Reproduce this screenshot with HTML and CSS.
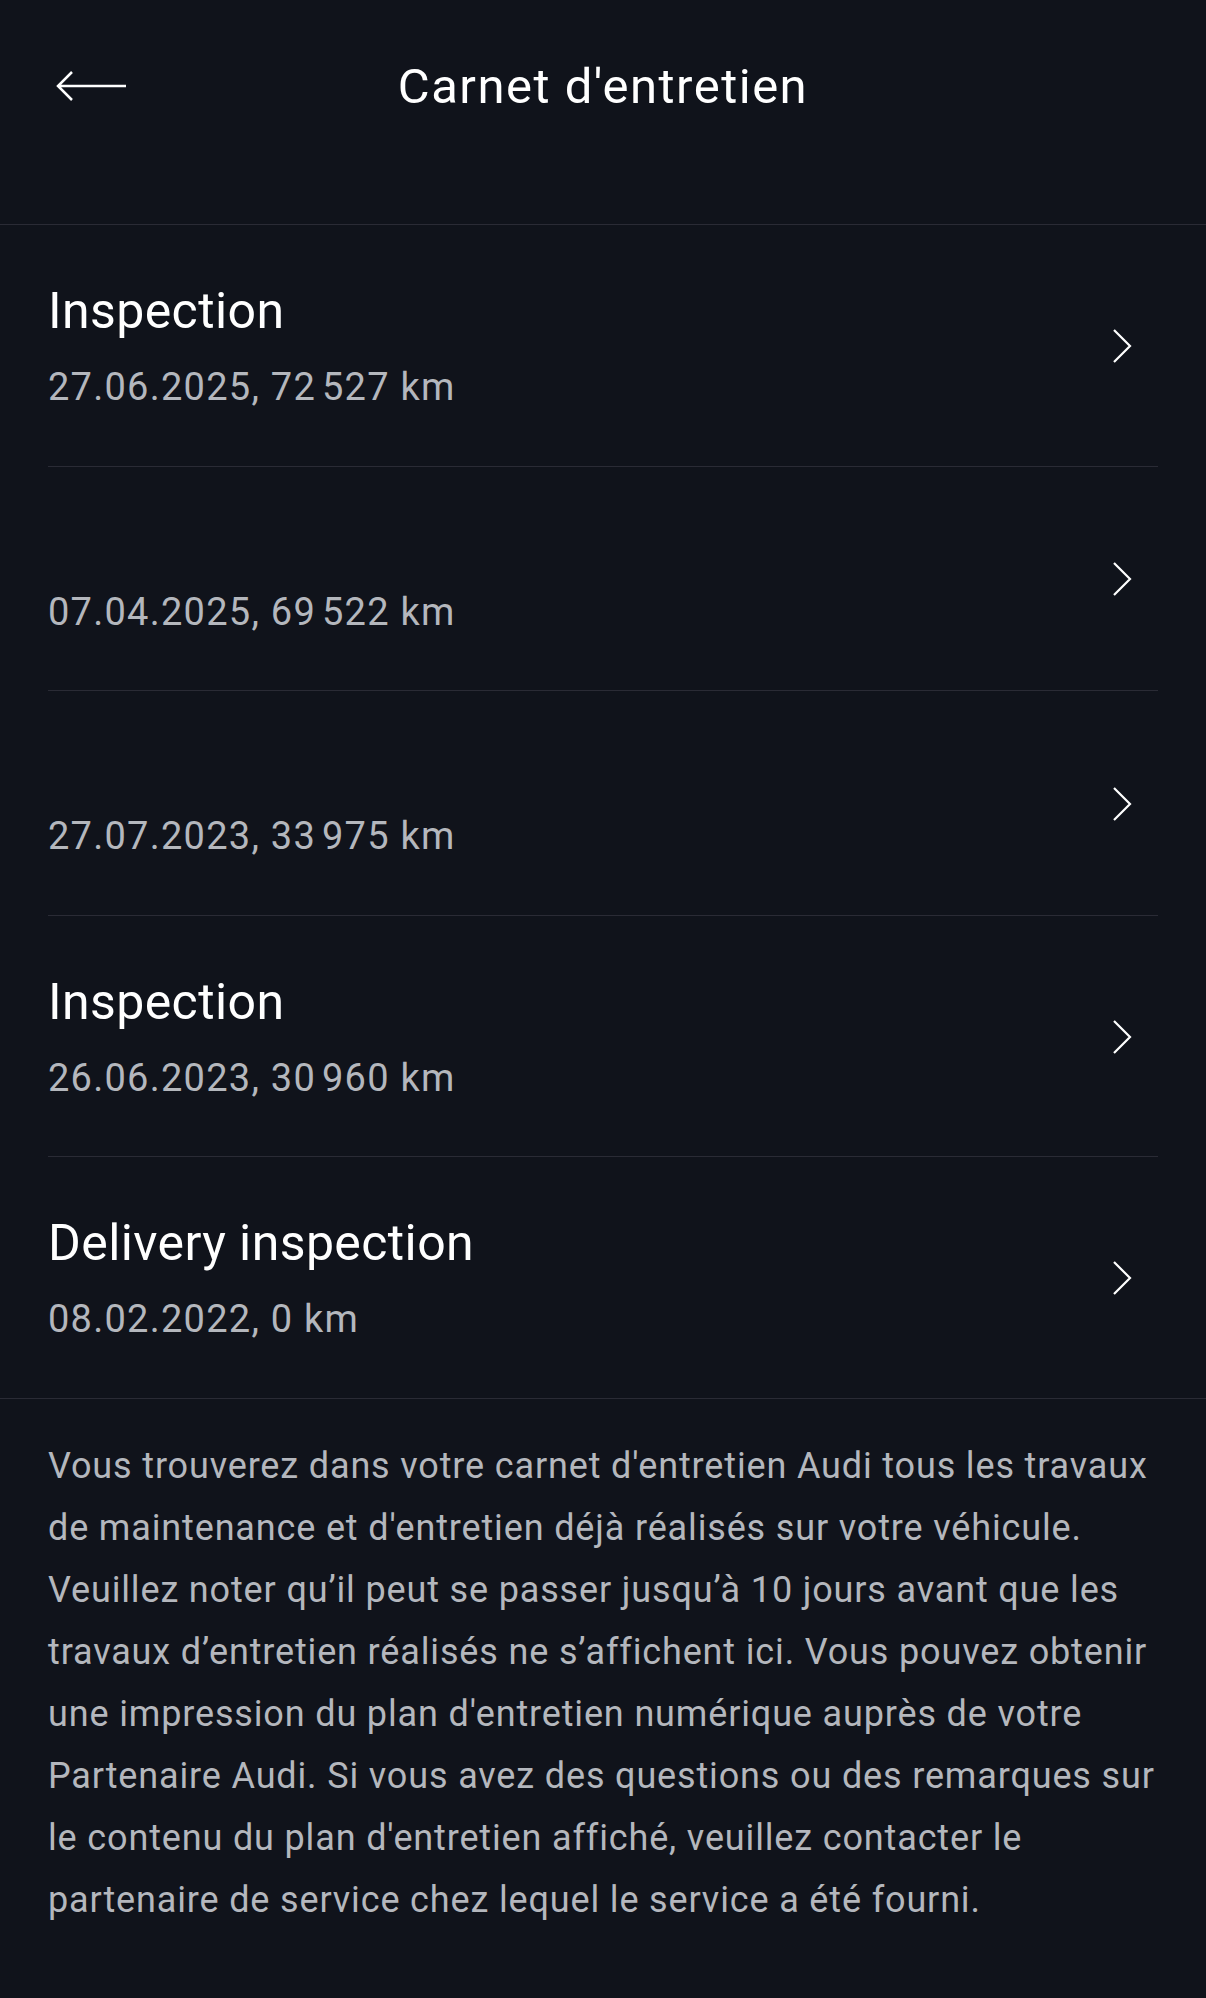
FILE: index.html
```html
<!DOCTYPE html>
<html lang="fr">
<head>
    <meta charset="UTF-8">
    <meta name="viewport" content="width=device-width, initial-scale=1.0">
    <title>Carnet d'entretien</title>
    <link rel="stylesheet" href="styles.css">
</head>
<body>

    <header class="header">
        <div class="topbar">
            <button class="back" aria-label="Retour">
                <svg width="72" height="32" viewBox="0 0 72 32">
                    <path d="M16 2 L2 16 L16 30 M2 16 H70" fill="none" stroke="#fff" stroke-width="2.5"/>
                </svg>
            </button>
            <h1>Carnet d'entretien</h1>
        </div>
    </header>

    <ul class="entries">
        <li class="entry">
            <div class="entry-text">
                <div class="entry-title">Inspection</div>
                <div class="entry-meta">27.06.2025, 72&#8239;527 km</div>
            </div>
            <svg class="chevron" width="22" height="36" viewBox="0 0 22 36"><path d="M2 2 L18 18 L2 34" fill="none" stroke="#fff" stroke-width="2.2"/></svg>
        </li>
        <li class="entry">
            <div class="entry-text">
                <div class="entry-title"></div>
                <div class="entry-meta">07.04.2025, 69&#8239;522 km</div>
            </div>
            <svg class="chevron" width="22" height="36" viewBox="0 0 22 36"><path d="M2 2 L18 18 L2 34" fill="none" stroke="#fff" stroke-width="2.2"/></svg>
        </li>
        <li class="entry">
            <div class="entry-text">
                <div class="entry-title"></div>
                <div class="entry-meta">27.07.2023, 33&#8239;975 km</div>
            </div>
            <svg class="chevron" width="22" height="36" viewBox="0 0 22 36"><path d="M2 2 L18 18 L2 34" fill="none" stroke="#fff" stroke-width="2.2"/></svg>
        </li>
        <li class="entry">
            <div class="entry-text">
                <div class="entry-title">Inspection</div>
                <div class="entry-meta">26.06.2023, 30&#8239;960 km</div>
            </div>
            <svg class="chevron" width="22" height="36" viewBox="0 0 22 36"><path d="M2 2 L18 18 L2 34" fill="none" stroke="#fff" stroke-width="2.2"/></svg>
        </li>
        <li class="entry">
            <div class="entry-text">
                <div class="entry-title">Delivery inspection</div>
                <div class="entry-meta">08.02.2022, 0 km</div>
            </div>
            <svg class="chevron" width="22" height="36" viewBox="0 0 22 36"><path d="M2 2 L18 18 L2 34" fill="none" stroke="#fff" stroke-width="2.2"/></svg>
        </li>
    </ul>

    <p class="note">
        Vous trouverez dans votre carnet d'entretien Audi tous les travaux<br>
        de maintenance et d'entretien déjà réalisés sur votre véhicule.<br>
        Veuillez noter qu’il peut se passer jusqu’à 10 jours avant que les<br>
        travaux d’entretien réalisés ne s’affichent ici. Vous pouvez obtenir<br>
        une impression du plan d'entretien numérique auprès de votre<br>
        Partenaire Audi. Si vous avez des questions ou des remarques sur<br>
        le contenu du plan d'entretien affiché, veuillez contacter le<br>
        partenaire de service chez lequel le service a été fourni.
    </p>

</body>
</html>
```

FILE: styles.css
```css
body {
    margin: 0;
    background-color: #10131b;
    color: #fff;
    font-family: Roboto, "Noto Sans", sans-serif;
}

.header {
    height: 224px;
    border-bottom: 1px solid #2a2b35;
}

.topbar {
    position: relative;
    height: 172px;
    display: flex;
    align-items: center;
    justify-content: center;
}

.back {
    position: absolute;
    left: 56px;
    top: 70px;
    padding: 0;
    background: none;
    border: none;
    cursor: pointer;
    line-height: 0;
}

h1 {
    margin: 0;
    font-size: 49px;
    font-weight: 400;
    letter-spacing: 1.5px;
}

.entries {
    list-style: none;
    margin: 0;
    padding: 0 48px;
    border-bottom: 1px solid #2a2b35;
}

.entry {
    display: flex;
    align-items: center;
    justify-content: space-between;
    padding: 56px 0 54.5px;
    border-bottom: 1px solid #2a2b35;
}

.entry:last-child {
    border-bottom: none;
}

.entry-title {
    font-size: 50px;
    line-height: 60px;
    letter-spacing: 0.4px;
    margin-bottom: 22px;
}

.entry-title:empty {
    height: 43px;
}

.entry-meta {
    font-size: 38px;
    line-height: 48px;
    color: #b4b7bd;
    letter-spacing: 1.25px;
}

.chevron {
    margin-right: 24px;
}

.note {
    margin: 0;
    padding: 36px 48px 60px;
    font-size: 36px;
    line-height: 62px;
    color: #b4b7bd;
    letter-spacing: 0.85px;
    white-space: nowrap;
}
```
